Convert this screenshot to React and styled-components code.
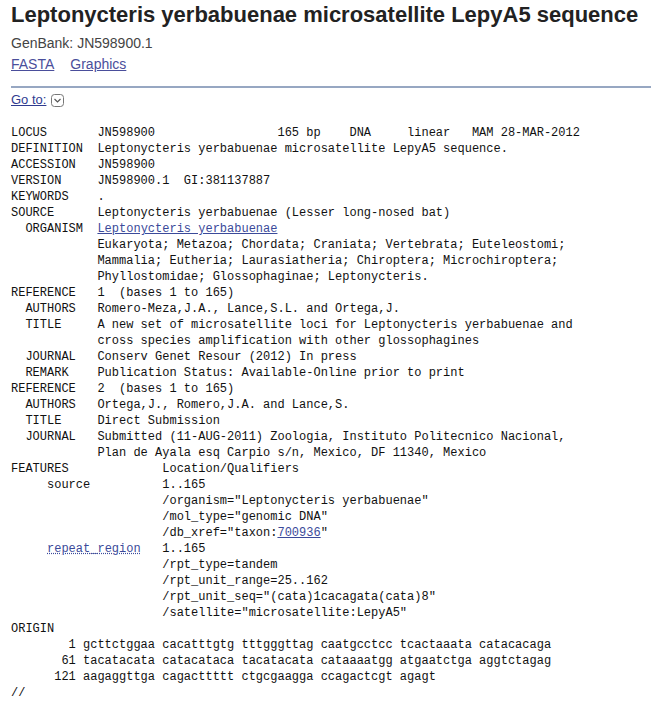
import React from 'react';
import styled, { createGlobalStyle } from 'styled-components';

const GlobalStyle = createGlobalStyle`
  body {
    margin: 0;
    background: #fff;
    font-family: "Liberation Sans", Arial, sans-serif;
  }
`;

const Page = styled.div`
  padding: 0 0 0 11px;
  width: 640px;
`;

const Title = styled.h1`
  margin: 0;
  padding-top: 2px;
  font-size: 22px;
  line-height: 26px;
  font-weight: bold;
  color: #222;
  white-space: nowrap;
`;

const Accession = styled.div`
  margin-top: 7px;
  font-size: 14px;
  line-height: 16px;
  color: #444;
`;

const LinkBar = styled.div`
  display: flex;
  gap: 16px;
  margin-top: 5px;
  font-size: 14px;
  line-height: 16px;
`;

const NavLink = styled.a`
  color: #4a4e9b;
  text-decoration: underline;
  cursor: pointer;
`;

const Rule = styled.hr`
  margin: 14px 0 0 0;
  border: 0;
  height: 2px;
  background: #97a7c2;
`;

const GoTo = styled.div`
  display: flex;
  align-items: center;
  gap: 5px;
  margin-top: 4px;
  font-size: 13px;
  line-height: 16px;
`;

const GoToLink = styled.a`
  color: #2f3b8f;
  text-decoration: underline;
`;

const Seq = styled.div`
  margin: 17px 0 0 0;
  font-family: "Liberation Mono", "DejaVu Sans Mono", monospace;
  font-size: 12px;
  line-height: 16px;
  color: #111;
`;

const Line = styled.div`
  white-space: pre;
  height: 16px;
`;

const SeqLink = styled.a`
  color: #3b4a9a;
  text-decoration: underline;
`;

const FeatureKey = styled.span`
  color: #3b4a9a;
  text-decoration: underline dotted #3b4a9a;
`;

function ChevronBox() {
  return (
    <svg width="13" height="13" viewBox="0 0 13 13">
      <rect x="0.5" y="0.5" width="12" height="12" rx="3" fill="#fff" stroke="#777" />
      <polyline points="3.5,5 6.5,8 9.5,5" fill="none" stroke="#555" strokeWidth="1.2" />
    </svg>
  );
}

const record = [
  'LOCUS       JN598900                 165 bp    DNA     linear   MAM 28-MAR-2012',
  'DEFINITION  Leptonycteris yerbabuenae microsatellite LepyA5 sequence.',
  'ACCESSION   JN598900',
  'VERSION     JN598900.1  GI:381137887',
  'KEYWORDS    .',
  'SOURCE      Leptonycteris yerbabuenae (Lesser long-nosed bat)',
  <>{'  ORGANISM  '}<SeqLink>Leptonycteris yerbabuenae</SeqLink></>,
  '            Eukaryota; Metazoa; Chordata; Craniata; Vertebrata; Euteleostomi;',
  '            Mammalia; Eutheria; Laurasiatheria; Chiroptera; Microchiroptera;',
  '            Phyllostomidae; Glossophaginae; Leptonycteris.',
  'REFERENCE   1  (bases 1 to 165)',
  '  AUTHORS   Romero-Meza,J.A., Lance,S.L. and Ortega,J.',
  '  TITLE     A new set of microsatellite loci for Leptonycteris yerbabuenae and',
  '            cross species amplification with other glossophagines',
  '  JOURNAL   Conserv Genet Resour (2012) In press',
  '  REMARK    Publication Status: Available-Online prior to print',
  'REFERENCE   2  (bases 1 to 165)',
  '  AUTHORS   Ortega,J., Romero,J.A. and Lance,S.',
  '  TITLE     Direct Submission',
  '  JOURNAL   Submitted (11-AUG-2011) Zoologia, Instituto Politecnico Nacional,',
  '            Plan de Ayala esq Carpio s/n, Mexico, DF 11340, Mexico',
  'FEATURES             Location/Qualifiers',
  '     source          1..165',
  '                     /organism="Leptonycteris yerbabuenae"',
  '                     /mol_type="genomic DNA"',
  <>{'                     /db_xref="taxon:'}<SeqLink>700936</SeqLink>{'"'}</>,
  <>{'     '}<FeatureKey>repeat_region</FeatureKey>{'   1..165'}</>,
  '                     /rpt_type=tandem',
  '                     /rpt_unit_range=25..162',
  '                     /rpt_unit_seq="(cata)1cacagata(cata)8"',
  '                     /satellite="microsatellite:LepyA5"',
  'ORIGIN',
  '        1 gcttctggaa cacatttgtg tttgggttag caatgcctcc tcactaaata catacacaga',
  '       61 tacatacata catacataca tacatacata cataaaatgg atgaatctga aggtctagag',
  '      121 aagaggttga cagacttttt ctgcgaagga ccagactcgt agagt',
  '//',
];

export default function App() {
  return (
    <Page>
      <GlobalStyle />
      <Title>Leptonycteris yerbabuenae microsatellite LepyA5 sequence</Title>
      <Accession>GenBank: JN598900.1</Accession>
      <LinkBar>
        <NavLink>FASTA</NavLink>
        <NavLink>Graphics</NavLink>
      </LinkBar>
      <Rule />
      <GoTo>
        <GoToLink>Go to:</GoToLink>
        <ChevronBox />
      </GoTo>
      <Seq>
        {record.map((line, i) => (
          <Line key={i}>{line}</Line>
        ))}
      </Seq>
    </Page>
  );
}
